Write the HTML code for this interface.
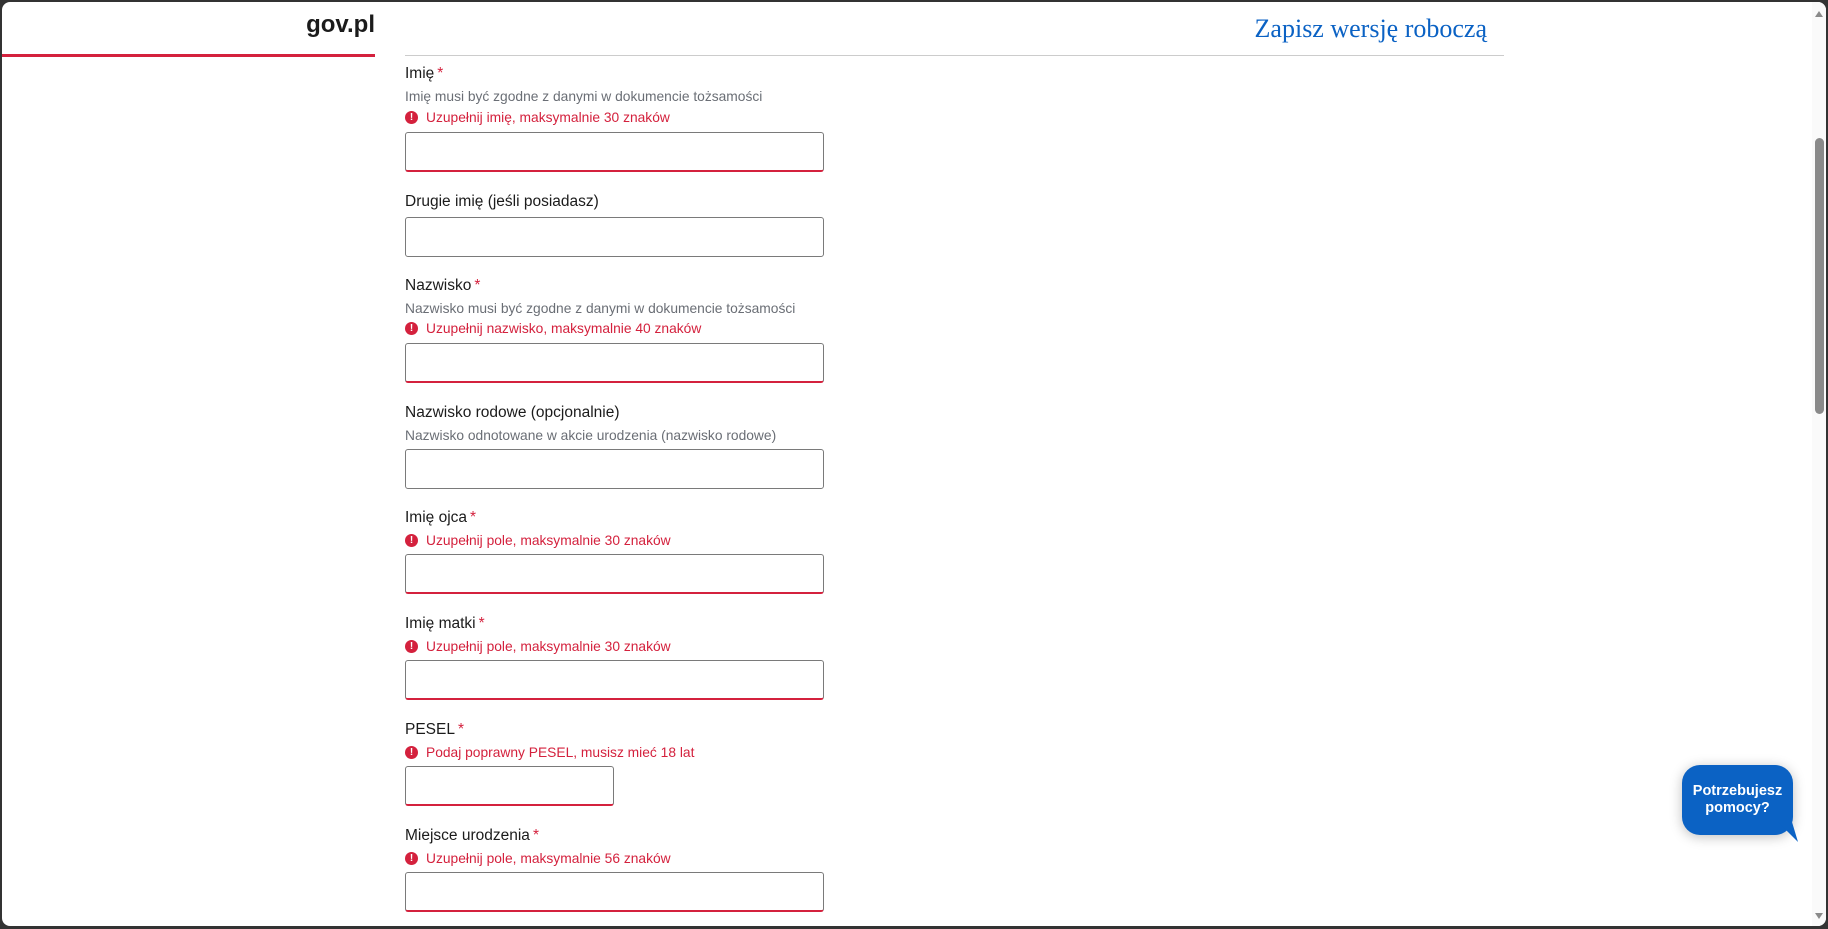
<!DOCTYPE html>
<html><head><meta charset="utf-8"><style>
*{margin:0;padding:0;box-sizing:border-box}
html,body{width:1828px;height:929px;overflow:hidden;background:#333}
#win{position:absolute;left:2px;top:2px;width:1824px;height:924px;background:#fff;border-radius:8px;overflow:hidden;font-family:"Liberation Sans",Arial,sans-serif}
.a{position:absolute;white-space:nowrap}
.lbl{font-size:15.5px;color:#1b1b1b;line-height:20px;left:403px}
.lbl b{color:#d4213d;font-weight:normal;margin-left:3px}
.hint{font-size:13.8px;color:#6a6e75;line-height:18px;left:403px}
.err{font-size:13.8px;color:#d4213d;line-height:18px;left:424px}
.ic{position:absolute;left:403px;width:13px;height:13px;border-radius:50%;background:#d4213d;color:#fff;font-weight:bold;font-size:10px;line-height:13px;text-align:center}
.in{position:absolute;left:403px;width:419px;height:40px;border:1px solid #7a7a7a;border-radius:3px}
.in.e{border-bottom:2px solid #d4213d}
</style></head><body>
<div id="win">
<div class="a" style="left:0;top:7px;width:373px;text-align:right;font-size:24px;font-weight:bold;color:#1b1b1b;line-height:32px">gov.pl</div>
<div class="a" style="left:0;top:52px;width:373px;height:3px;background:#d4213d"></div>
<div class="a" style="left:403px;top:53px;width:1099px;height:1px;background:#ccc"></div>
<div class="a" style="right:339px;top:11px;font-family:'Liberation Serif',serif;font-size:26px;color:#0b62c4;line-height:32px">Zapisz wersję roboczą</div>

<div class="a lbl" style="top:62px">Imię<b>*</b></div>
<div class="a hint" style="top:86px">Imię musi być zgodne z danymi w dokumencie tożsamości</div>
<div class="ic" style="top:109px">!</div><div class="a err" style="top:107px">Uzupełnij imię, maksymalnie 30 znaków</div>
<div class="in e" style="top:130px"></div>

<div class="a lbl" style="top:190px">Drugie imię (jeśli posiadasz)</div>
<div class="in" style="top:215px"></div>

<div class="a lbl" style="top:274px">Nazwisko<b>*</b></div>
<div class="a hint" style="top:298px">Nazwisko musi być zgodne z danymi w dokumencie tożsamości</div>
<div class="ic" style="top:320px">!</div><div class="a err" style="top:318px">Uzupełnij nazwisko, maksymalnie 40 znaków</div>
<div class="in e" style="top:341px"></div>

<div class="a lbl" style="top:401px">Nazwisko rodowe (opcjonalnie)</div>
<div class="a hint" style="top:425px">Nazwisko odnotowane w akcie urodzenia (nazwisko rodowe)</div>
<div class="in" style="top:447px"></div>

<div class="a lbl" style="top:506px">Imię ojca<b>*</b></div>
<div class="ic" style="top:532px">!</div><div class="a err" style="top:530px">Uzupełnij pole, maksymalnie 30 znaków</div>
<div class="in e" style="top:552px"></div>

<div class="a lbl" style="top:612px">Imię matki<b>*</b></div>
<div class="ic" style="top:638px">!</div><div class="a err" style="top:636px">Uzupełnij pole, maksymalnie 30 znaków</div>
<div class="in e" style="top:658px"></div>

<div class="a lbl" style="top:718px">PESEL<b>*</b></div>
<div class="ic" style="top:744px">!</div><div class="a err" style="top:742px">Podaj poprawny PESEL, musisz mieć 18 lat</div>
<div class="in e" style="top:764px;width:209px"></div>

<div class="a lbl" style="top:824px">Miejsce urodzenia<b>*</b></div>
<div class="ic" style="top:850px">!</div><div class="a err" style="top:848px">Uzupełnij pole, maksymalnie 56 znaków</div>
<div class="in e" style="top:870px"></div>

<div class="a" style="left:1680px;top:763px;width:111px;height:70px;background:#0b62c4;border-radius:18px;box-shadow:0 2px 12px rgba(0,0,0,.25);color:#fff;font-size:14.5px;font-weight:bold;line-height:17px;text-align:center;padding-top:18px">Potrzebujesz<br>pomocy?</div>
<svg class="a" style="left:1770px;top:820px" width="30" height="24"><path d="M6 0 L20 0 L26 20 Z" fill="#0b62c4"/></svg>

<div class="a" style="left:1810px;top:0;width:14px;height:924px;background:#fafafa"></div>
<div class="a" style="left:1813px;top:136px;width:9px;height:276px;background:#8a8a8a;border-radius:5px"></div>
<svg class="a" style="left:1812px;top:8px" width="10" height="8"><path d="M1 7 L5 1 L9 7 Z" fill="#8a8a8a"/></svg>
<svg class="a" style="left:1812px;top:910px" width="10" height="8"><path d="M1 1 L5 7 L9 1 Z" fill="#8a8a8a"/></svg>
</div>
</body></html>
